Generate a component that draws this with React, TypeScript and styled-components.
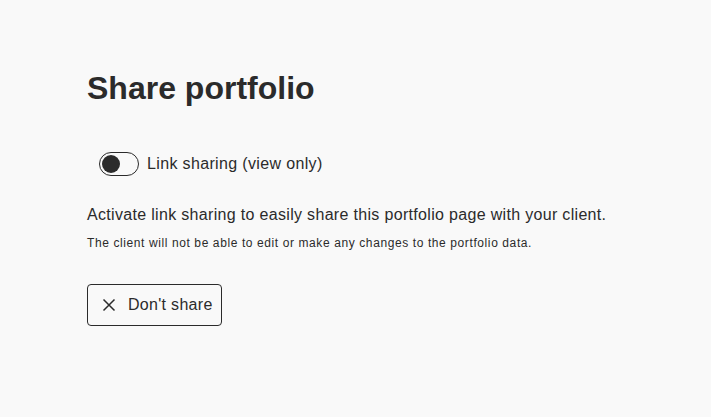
import { useState } from "react";
import styled, { createGlobalStyle } from "styled-components";

const GlobalStyle = createGlobalStyle`
  html, body {
    margin: 0;
    padding: 0;
    background: #f9f9f9;
  }
  body {
    font-family: "Liberation Sans", Arial, sans-serif;
    color: #2b2b2b;
  }
`;

const Page = styled.main`
  padding: 70px 87px;
`;

const Title = styled.h1`
  font-size: 32px;
  font-weight: 700;
  line-height: 36px;
  margin: 0 0 46px;
  color: #2b2b2b;
`;

const ToggleRow = styled.label`
  display: flex;
  align-items: center;
  gap: 8px;
  padding-left: 12px;
  font-size: 16px;
  letter-spacing: 0.35px;
  cursor: pointer;
`;

const Track = styled.span<{ $on: boolean }>`
  box-sizing: border-box;
  width: 40px;
  height: 24px;
  border: 1px solid #2b2b2b;
  border-radius: 12px;
  display: flex;
  align-items: center;
  padding: 0 2px;
  justify-content: ${(p) => (p.$on ? "flex-end" : "flex-start")};
  background: ${(p) => (p.$on ? "#2b2b2b" : "transparent")};
`;

const Knob = styled.span<{ $on: boolean }>`
  width: 18px;
  height: 18px;
  border-radius: 50%;
  background: ${(p) => (p.$on ? "#f9f9f9" : "#2b2b2b")};
`;

const Lead = styled.p`
  font-size: 16px;
  line-height: 20px;
  letter-spacing: 0.32px;
  margin: 29px 0 11px;
`;

const Note = styled.p`
  font-size: 12px;
  line-height: 14px;
  letter-spacing: 0.6px;
  margin: 0 0 34px;
`;

const Button = styled.button`
  box-sizing: border-box;
  display: inline-flex;
  align-items: center;
  gap: 12px;
  height: 42px;
  padding: 0 8px 0 14px;
  border: 1px solid #2b2b2b;
  border-radius: 4px;
  background: transparent;
  color: #2b2b2b;
  font-family: inherit;
  font-size: 16px;
  letter-spacing: 0.3px;
  cursor: pointer;
`;

export default function App() {
  const [on, setOn] = useState(false);
  return (
    <>
      <GlobalStyle />
      <Page>
        <Title>Share portfolio</Title>
        <ToggleRow onClick={() => setOn(!on)}>
          <Track $on={on}>
            <Knob $on={on} />
          </Track>
          Link sharing (view only)
        </ToggleRow>
        <Lead>Activate link sharing to easily share this portfolio page with your client.</Lead>
        <Note>The client will not be able to edit or make any changes to the portfolio data.</Note>
        <Button>
          <svg width="14" height="14" viewBox="0 0 14 14" fill="none" stroke="#2b2b2b" strokeWidth="1.5">
            <path d="M1.5 1.5 L12.5 12.5 M12.5 1.5 L1.5 12.5" />
          </svg>
          Don't share
        </Button>
      </Page>
    </>
  );
}
